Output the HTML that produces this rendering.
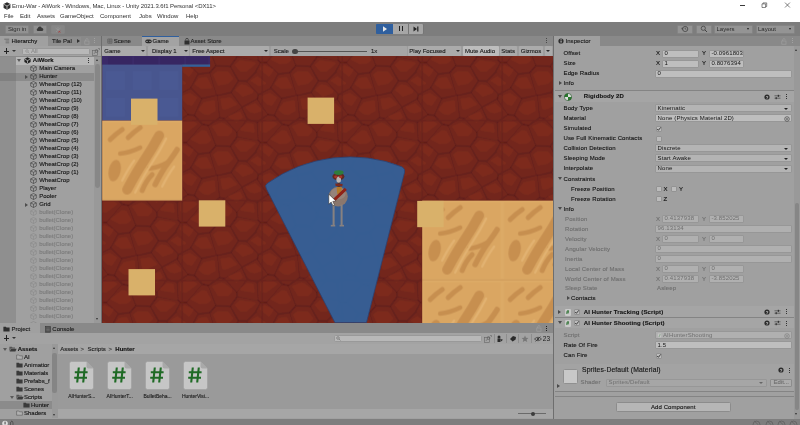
<!DOCTYPE html><html><head><meta charset="utf-8"><title>Unity</title><style>
*{box-sizing:border-box;margin:0;padding:0}
html,body{width:800px;height:425px;overflow:hidden;background:#a0a0a0}
#w{position:absolute;left:0;top:0;width:800px;height:425px;will-change:transform}
body{font-family:"Liberation Sans",sans-serif;font-size:6px;color:#111;position:relative;line-height:1}
.a{position:absolute}
.t{position:absolute;white-space:nowrap;line-height:8px;height:8px;-webkit-text-stroke:0.12px currentColor}
.b{font-weight:bold}
.fld{position:absolute;background:#bdbdbd;border:0.5px solid #979797;border-radius:1px;height:8px}
.fld span{position:absolute;left:1.6px;top:-0.5px;line-height:7.5px;white-space:nowrap}
.dd{position:absolute;background:#b3b3b3;border:0.5px solid #979797;border-radius:1px;height:8px}
.dd span{position:absolute;left:1.6px;top:-0.5px;line-height:7.5px;white-space:nowrap}
.dd i{position:absolute;right:2.6px;top:2.7px;width:0;height:0;border-left:2px solid transparent;border-right:2px solid transparent;border-top:2.5px solid #222}
.dis{color:#6e6e6e}
.cb{position:absolute;width:6px;height:6px;background:#bcbcbc;border:0.5px solid #939393;border-radius:1px}
.sep{position:absolute;height:0.7px;background:#848484}
.arrR{position:absolute;width:0;height:0;border-top:2px solid transparent;border-bottom:2px solid transparent;border-left:3px solid #4a4a4a}
.arrD{position:absolute;width:0;height:0;border-left:2px solid transparent;border-right:2px solid transparent;border-top:3px solid #4a4a4a}
</style></head><body><div id="w">
<div class="a" style="left:0px;top:0px;width:800px;height:21.5px;background:#ffffff;"></div>
<svg class="a" style="left:2.5px;top:1.5px" width="8" height="8" viewBox="0 0 8 8"><path d="M4 0.3 L7.4 2.1 V5.9 L4 7.7 L0.6 5.9 V2.1 Z" fill="#2b2b2b"/><path d="M4 4 V7.2 M4 4 L1 2.4 M4 4 L7 2.4" stroke="#ddd" stroke-width="0.7" fill="none"/></svg>
<div class="t " style="left:12px;top:2.0px;color:#333;letter-spacing:-0.07px;-webkit-text-stroke:0">Emu-War - AiWork - Windows, Mac, Linux - Unity 2021.3.6f1 Personal &lt;DX11&gt;</div>
<div class="a" style="left:739.5px;top:4.9px;width:5px;height:0.65px;background:#3a3a3a;"></div>
<svg class="a" style="left:761px;top:2px" width="7" height="7" viewBox="0 0 7 7"><path d="M1 1.9 H4.6 V5.5 H1 Z M2 1.9 V0.9 H5.7 V4.5 H4.6" fill="none" stroke="#3a3a3a" stroke-width="0.6"/></svg>
<svg class="a" style="left:784px;top:2px" width="7" height="7" viewBox="0 0 7 7"><path d="M1 0.6 L5.9 5.5 M5.9 0.6 L1 5.5" fill="none" stroke="#3a3a3a" stroke-width="0.65"/></svg>
<div class="t " style="left:4px;top:12.3px;color:#2e2e2e;-webkit-text-stroke:0">File</div>
<div class="t " style="left:20px;top:12.3px;color:#2e2e2e;-webkit-text-stroke:0">Edit</div>
<div class="t " style="left:37px;top:12.3px;color:#2e2e2e;-webkit-text-stroke:0">Assets</div>
<div class="t " style="left:60px;top:12.3px;color:#2e2e2e;-webkit-text-stroke:0">GameObject</div>
<div class="t " style="left:100px;top:12.3px;color:#2e2e2e;-webkit-text-stroke:0">Component</div>
<div class="t " style="left:139px;top:12.3px;color:#2e2e2e;-webkit-text-stroke:0">Jobs</div>
<div class="t " style="left:157px;top:12.3px;color:#2e2e2e;-webkit-text-stroke:0">Window</div>
<div class="t " style="left:186px;top:12.3px;color:#2e2e2e;-webkit-text-stroke:0">Help</div>
<div class="a" style="left:0px;top:21.5px;width:800px;height:14.5px;background:#7d7d7d;"></div>
<div class="a" style="left:4.5px;top:24.5px;width:24.5px;height:9px;background:#919191;border:0.5px solid #848484;border-radius:1px"></div>
<div class="t " style="left:8px;top:24.9px;color:#2a2a2a;-webkit-text-stroke:0">Sign in</div>
<div class="a" style="left:33px;top:24.5px;width:14px;height:9px;background:#919191;border:0.5px solid #848484;border-radius:1px"></div>
<svg class="a" style="left:36px;top:26px" width="8" height="6" viewBox="0 0 8 6"><path d="M1.6 5 A1.5 1.5 0 0 1 1.8 2.2 A2.1 2.1 0 0 1 5.8 1.9 A1.6 1.6 0 0 1 6.3 5 Z" fill="#3a3a3a"/></svg>
<div class="a" style="left:50.5px;top:24.5px;width:14.5px;height:9px;background:#868686;border:0.5px solid #848484;border-radius:1px"></div>
<svg class="a" style="left:54px;top:25.5px" width="8" height="8" viewBox="0 0 8 8"><path d="M4 1 V4 M1.5 2 L4 4 L6.5 2 M2 6 L4 4 L6 6" stroke="#9a9a9a" stroke-width="0.6" fill="none"/><path d="M4.5 4.8 L6.3 6.6 M6.3 4.8 L4.5 6.6" stroke="#a33" stroke-width="0.7"/></svg>
<div class="a" style="left:375.8px;top:23.8px;width:48px;height:9.9px;background:#767676;border-radius:1.2px"></div>
<div class="a" style="left:376px;top:24px;width:16.5px;height:9.5px;background:#2f5f9e;border-radius:1px 0 0 1px"></div>
<svg class="a" style="left:381.5px;top:26px" width="6" height="6" viewBox="0 0 6 6"><path d="M1 0.3 L5 3 L1 5.7 Z" fill="#e8e8e8"/></svg>
<div class="a" style="left:393.2px;top:24px;width:15.1px;height:9.5px;background:#a6a6a6;"></div>
<div class="a" style="left:399px;top:26.3px;width:1.3px;height:5px;background:#222;"></div>
<div class="a" style="left:401.6px;top:26.3px;width:1.3px;height:5px;background:#222;"></div>
<div class="a" style="left:409.1px;top:24px;width:14.4px;height:9.5px;background:#a6a6a6;border-radius:0 1px 1px 0"></div>
<svg class="a" style="left:413px;top:26px" width="7" height="6" viewBox="0 0 7 6"><path d="M0.5 0.5 L4 3 L0.5 5.5 Z" fill="#222"/><rect x="4.2" y="0.5" width="1.2" height="5" fill="#222"/></svg>
<div class="a" style="left:677px;top:24.5px;width:16px;height:9px;background:#949494;border:0.5px solid #848484;border-radius:1px"></div>
<svg class="a" style="left:681px;top:25px" width="8" height="8" viewBox="0 0 8 8"><circle cx="4.2" cy="4" r="2.6" fill="none" stroke="#3a3a3a" stroke-width="0.7"/><path d="M4.2 2.5 V4 L5.3 4.6 M1.2 2.6 L1.6 4.2 L0.3 3.6" stroke="#3a3a3a" stroke-width="0.6" fill="none"/></svg>
<div class="a" style="left:696px;top:24.5px;width:15.5px;height:9px;background:#949494;border:0.5px solid #848484;border-radius:1px"></div>
<svg class="a" style="left:700px;top:25px" width="8" height="8" viewBox="0 0 8 8"><circle cx="3.3" cy="3.3" r="2.1" fill="none" stroke="#3a3a3a" stroke-width="0.7"/><path d="M4.9 4.9 L7 7" stroke="#3a3a3a" stroke-width="0.9"/></svg>
<div class="a" style="left:714.3px;top:24.5px;width:38.7px;height:9px;background:#949494;border:0.5px solid #848484;border-radius:1px"></div>
<div class="t " style="left:716.5px;top:24.9px;color:#2a2a2a;-webkit-text-stroke:0">Layers</div>
<div class="arrD" style="left:747.3px;top:28.2px;border-top-color:#222;border-left-width:1.7px;border-right-width:1.7px;border-top-width:2.3px"></div>
<div class="a" style="left:756px;top:24.5px;width:39px;height:9px;background:#949494;border:0.5px solid #848484;border-radius:1px"></div>
<div class="t " style="left:758px;top:24.9px;color:#2a2a2a;-webkit-text-stroke:0">Layout</div>
<div class="arrD" style="left:789.3px;top:28.2px;border-top-color:#222;border-left-width:1.7px;border-right-width:1.7px;border-top-width:2.3px"></div>
<div class="a" style="left:0px;top:36px;width:101.5px;height:10px;background:#898989;"></div>
<div class="a" style="left:0px;top:36px;width:47.5px;height:10px;background:#a0a0a0;"></div>
<svg class="a" style="left:4px;top:38px" width="6" height="6" viewBox="0 0 6 6"><path d="M0.3 1.2 H5.2 M1.6 3 H5.2 M1.6 4.8 H5.2" stroke="#4a4a4a" stroke-width="0.55"/></svg>
<div class="t " style="left:11.5px;top:36.7px;">Hierarchy</div>
<div class="a" style="left:48px;top:36.5px;width:33.3px;height:9.5px;background:#8e8e8e;"></div>
<div class="t " style="left:52px;top:36.7px;color:#1c1c1c">Tile Pal&#8201;</div>
<div class="arrR" style="left:76.5px;top:39px;border-left-color:#333"></div>
<svg class="a" style="left:83.5px;top:37.5px" width="6" height="7" viewBox="0 0 6 7"><rect x="0.8" y="3" width="4.2" height="3.2" fill="none" stroke="#9f9f9f" stroke-width="0.7"/><path d="M1.7 3 V1.8 A1.2 1.2 0 0 1 4.1 1.8" fill="none" stroke="#9f9f9f" stroke-width="0.7"/></svg>
<div class="a" style="left:94.2px;top:38.3px;width:0.9px;height:0.9px;background:#a2a2a2;"></div>
<div class="a" style="left:94.2px;top:40.3px;width:0.9px;height:0.9px;background:#a2a2a2;"></div>
<div class="a" style="left:94.2px;top:42.3px;width:0.9px;height:0.9px;background:#a2a2a2;"></div>
<div class="a" style="left:0px;top:46px;width:101.5px;height:10.5px;background:#a3a3a3;"></div>
<div class="a" style="left:0px;top:56px;width:101.5px;height:0.6px;background:#8a8a8a;"></div>
<div class="a" style="left:3.8px;top:50.6px;width:5.6px;height:0.9px;background:#222;"></div>
<div class="a" style="left:6.15px;top:48.2px;width:0.9px;height:5.6px;background:#222;"></div>
<div class="arrD" style="left:11.5px;top:50px;border-top-color:#333;border-left-width:2.1px;border-right-width:2.1px;border-top-width:2.6px"></div>
<div class="a" style="left:22.3px;top:47.5px;width:68px;height:7.5px;background:#b8b8b8;border:0.5px solid #999;border-radius:1.5px"></div>
<svg class="a" style="left:25px;top:49px" width="5" height="5" viewBox="0 0 5 5"><circle cx="2" cy="2" r="1.3" fill="none" stroke="#8a8a8a" stroke-width="0.6"/><path d="M3 3 L4.5 4.5" stroke="#8a8a8a" stroke-width="0.6"/></svg>
<div class="t " style="left:31px;top:47.0px;color:#8c8c8c">All</div>
<svg class="a" style="left:91.5px;top:47.5px" width="8" height="8" viewBox="0 0 8 8"><rect x="0.5" y="2.5" width="5" height="5" fill="none" stroke="#666" stroke-width="0.6"/><circle cx="4.5" cy="3" r="1.4" fill="none" stroke="#555" stroke-width="0.6"/><path d="M3.5 4 L2 5.8" stroke="#555" stroke-width="0.6"/><path d="M6 0.5 H7.5 V2" fill="none" stroke="#666" stroke-width="0.6"/></svg>
<div class="a" style="left:0px;top:56.6px;width:101.5px;height:266px;background:#a0a0a0;"></div>
<div class="a" style="left:0px;top:56.6px;width:16px;height:266px;background:#8f8f8f;"></div>
<div class="a" style="left:16px;top:56.6px;width:78px;height:8px;background:#b6b6b6;"></div>
<div class="a" style="left:0px;top:72.5px;width:94px;height:8px;background:#8b8b8b;"></div>
<div class="a" style="left:0px;top:72.5px;width:16px;height:8px;background:#808080;"></div>
<div class="a" style="left:94px;top:56.6px;width:7.5px;height:266px;background:#999999;"></div>
<div class="a" style="left:95.3px;top:64px;width:4.8px;height:124px;background:#878787;border-radius:2.4px"></div>
<div class="a" style="left:95.7px;top:59.3px;width:0;height:0;border-left:1.9px solid transparent;border-right:1.9px solid transparent;border-bottom:2.6px solid #333"></div>
<div class="a" style="left:95.7px;top:317.5px;width:0;height:0;border-left:1.9px solid transparent;border-right:1.9px solid transparent;border-top:2.6px solid #333"></div>
<div class="arrD" style="left:17.3px;top:59.2px;border-top-color:#5a5a5a"></div>
<svg class="a" style="left:23.5px;top:57.2px" width="7" height="7" viewBox="0 0 7 7"><path d="M3.5 0.3 L6.6 1.9 V5.1 L3.5 6.7 L0.4 5.1 V1.9 Z" fill="#222"/><path d="M3.5 3.6 V6.2 M3.5 3.6 L1 2.3 M3.5 3.6 L6 2.3" stroke="#ccc" stroke-width="0.7" fill="none"/></svg>
<div class="t b" style="left:32.8px;top:56.300000000000004px;color:#111">AiWork</div>
<div class="a" style="left:87.6px;top:58.4px;width:0.9px;height:0.9px;background:#333;"></div>
<div class="a" style="left:87.6px;top:60.4px;width:0.9px;height:0.9px;background:#333;"></div>
<div class="a" style="left:87.6px;top:62.4px;width:0.9px;height:0.9px;background:#333;"></div>
<svg class="a" style="left:30.2px;top:65.0px" width="7" height="7" viewBox="0 0 7 7"><path d="M3.5 0.5 L6.3 1.9 V5.1 L3.5 6.5 L0.7 5.1 V1.9 Z M0.7 1.9 L3.5 3.3 L6.3 1.9 M3.5 3.3 V6.5" fill="none" stroke="#3c3c3c" stroke-width="0.6" stroke-linejoin="round"/></svg>
<div class="t " style="left:39.2px;top:64.3px;color:#141414">Main Camera</div>
<svg class="a" style="left:30.2px;top:73.0px" width="7" height="7" viewBox="0 0 7 7"><path d="M3.5 0.5 L6.3 1.9 V5.1 L3.5 6.5 L0.7 5.1 V1.9 Z M0.7 1.9 L3.5 3.3 L6.3 1.9 M3.5 3.3 V6.5" fill="none" stroke="#3c3c3c" stroke-width="0.6" stroke-linejoin="round"/></svg>
<div class="t " style="left:39.2px;top:72.3px;color:#141414">Hunter</div>
<div class="arrR" style="left:25.3px;top:74.5px;border-left-color:#4e4e4e"></div>
<svg class="a" style="left:30.2px;top:81.0px" width="7" height="7" viewBox="0 0 7 7"><path d="M3.5 0.5 L6.3 1.9 V5.1 L3.5 6.5 L0.7 5.1 V1.9 Z M0.7 1.9 L3.5 3.3 L6.3 1.9 M3.5 3.3 V6.5" fill="none" stroke="#3c3c3c" stroke-width="0.6" stroke-linejoin="round"/></svg>
<div class="t " style="left:39.2px;top:80.3px;color:#141414">WheatCrop (12)</div>
<svg class="a" style="left:30.2px;top:89.0px" width="7" height="7" viewBox="0 0 7 7"><path d="M3.5 0.5 L6.3 1.9 V5.1 L3.5 6.5 L0.7 5.1 V1.9 Z M0.7 1.9 L3.5 3.3 L6.3 1.9 M3.5 3.3 V6.5" fill="none" stroke="#3c3c3c" stroke-width="0.6" stroke-linejoin="round"/></svg>
<div class="t " style="left:39.2px;top:88.3px;color:#141414">WheatCrop (11)</div>
<svg class="a" style="left:30.2px;top:97.0px" width="7" height="7" viewBox="0 0 7 7"><path d="M3.5 0.5 L6.3 1.9 V5.1 L3.5 6.5 L0.7 5.1 V1.9 Z M0.7 1.9 L3.5 3.3 L6.3 1.9 M3.5 3.3 V6.5" fill="none" stroke="#3c3c3c" stroke-width="0.6" stroke-linejoin="round"/></svg>
<div class="t " style="left:39.2px;top:96.3px;color:#141414">WheatCrop (10)</div>
<svg class="a" style="left:30.2px;top:105.0px" width="7" height="7" viewBox="0 0 7 7"><path d="M3.5 0.5 L6.3 1.9 V5.1 L3.5 6.5 L0.7 5.1 V1.9 Z M0.7 1.9 L3.5 3.3 L6.3 1.9 M3.5 3.3 V6.5" fill="none" stroke="#3c3c3c" stroke-width="0.6" stroke-linejoin="round"/></svg>
<div class="t " style="left:39.2px;top:104.3px;color:#141414">WheatCrop (9)</div>
<svg class="a" style="left:30.2px;top:113.0px" width="7" height="7" viewBox="0 0 7 7"><path d="M3.5 0.5 L6.3 1.9 V5.1 L3.5 6.5 L0.7 5.1 V1.9 Z M0.7 1.9 L3.5 3.3 L6.3 1.9 M3.5 3.3 V6.5" fill="none" stroke="#3c3c3c" stroke-width="0.6" stroke-linejoin="round"/></svg>
<div class="t " style="left:39.2px;top:112.3px;color:#141414">WheatCrop (8)</div>
<svg class="a" style="left:30.2px;top:121.0px" width="7" height="7" viewBox="0 0 7 7"><path d="M3.5 0.5 L6.3 1.9 V5.1 L3.5 6.5 L0.7 5.1 V1.9 Z M0.7 1.9 L3.5 3.3 L6.3 1.9 M3.5 3.3 V6.5" fill="none" stroke="#3c3c3c" stroke-width="0.6" stroke-linejoin="round"/></svg>
<div class="t " style="left:39.2px;top:120.3px;color:#141414">WheatCrop (7)</div>
<svg class="a" style="left:30.2px;top:129.0px" width="7" height="7" viewBox="0 0 7 7"><path d="M3.5 0.5 L6.3 1.9 V5.1 L3.5 6.5 L0.7 5.1 V1.9 Z M0.7 1.9 L3.5 3.3 L6.3 1.9 M3.5 3.3 V6.5" fill="none" stroke="#3c3c3c" stroke-width="0.6" stroke-linejoin="round"/></svg>
<div class="t " style="left:39.2px;top:128.29999999999998px;color:#141414">WheatCrop (6)</div>
<svg class="a" style="left:30.2px;top:137.0px" width="7" height="7" viewBox="0 0 7 7"><path d="M3.5 0.5 L6.3 1.9 V5.1 L3.5 6.5 L0.7 5.1 V1.9 Z M0.7 1.9 L3.5 3.3 L6.3 1.9 M3.5 3.3 V6.5" fill="none" stroke="#3c3c3c" stroke-width="0.6" stroke-linejoin="round"/></svg>
<div class="t " style="left:39.2px;top:136.29999999999998px;color:#141414">WheatCrop (5)</div>
<svg class="a" style="left:30.2px;top:145.0px" width="7" height="7" viewBox="0 0 7 7"><path d="M3.5 0.5 L6.3 1.9 V5.1 L3.5 6.5 L0.7 5.1 V1.9 Z M0.7 1.9 L3.5 3.3 L6.3 1.9 M3.5 3.3 V6.5" fill="none" stroke="#3c3c3c" stroke-width="0.6" stroke-linejoin="round"/></svg>
<div class="t " style="left:39.2px;top:144.29999999999998px;color:#141414">WheatCrop (4)</div>
<svg class="a" style="left:30.2px;top:153.0px" width="7" height="7" viewBox="0 0 7 7"><path d="M3.5 0.5 L6.3 1.9 V5.1 L3.5 6.5 L0.7 5.1 V1.9 Z M0.7 1.9 L3.5 3.3 L6.3 1.9 M3.5 3.3 V6.5" fill="none" stroke="#3c3c3c" stroke-width="0.6" stroke-linejoin="round"/></svg>
<div class="t " style="left:39.2px;top:152.29999999999998px;color:#141414">WheatCrop (3)</div>
<svg class="a" style="left:30.2px;top:161.0px" width="7" height="7" viewBox="0 0 7 7"><path d="M3.5 0.5 L6.3 1.9 V5.1 L3.5 6.5 L0.7 5.1 V1.9 Z M0.7 1.9 L3.5 3.3 L6.3 1.9 M3.5 3.3 V6.5" fill="none" stroke="#3c3c3c" stroke-width="0.6" stroke-linejoin="round"/></svg>
<div class="t " style="left:39.2px;top:160.29999999999998px;color:#141414">WheatCrop (2)</div>
<svg class="a" style="left:30.2px;top:169.0px" width="7" height="7" viewBox="0 0 7 7"><path d="M3.5 0.5 L6.3 1.9 V5.1 L3.5 6.5 L0.7 5.1 V1.9 Z M0.7 1.9 L3.5 3.3 L6.3 1.9 M3.5 3.3 V6.5" fill="none" stroke="#3c3c3c" stroke-width="0.6" stroke-linejoin="round"/></svg>
<div class="t " style="left:39.2px;top:168.29999999999998px;color:#141414">WheatCrop (1)</div>
<svg class="a" style="left:30.2px;top:177.0px" width="7" height="7" viewBox="0 0 7 7"><path d="M3.5 0.5 L6.3 1.9 V5.1 L3.5 6.5 L0.7 5.1 V1.9 Z M0.7 1.9 L3.5 3.3 L6.3 1.9 M3.5 3.3 V6.5" fill="none" stroke="#3c3c3c" stroke-width="0.6" stroke-linejoin="round"/></svg>
<div class="t " style="left:39.2px;top:176.29999999999998px;color:#141414">WheatCrop</div>
<svg class="a" style="left:30.2px;top:185.0px" width="7" height="7" viewBox="0 0 7 7"><path d="M3.5 0.5 L6.3 1.9 V5.1 L3.5 6.5 L0.7 5.1 V1.9 Z M0.7 1.9 L3.5 3.3 L6.3 1.9 M3.5 3.3 V6.5" fill="none" stroke="#3c3c3c" stroke-width="0.6" stroke-linejoin="round"/></svg>
<div class="t " style="left:39.2px;top:184.29999999999998px;color:#141414">Player</div>
<svg class="a" style="left:30.2px;top:193.0px" width="7" height="7" viewBox="0 0 7 7"><path d="M3.5 0.5 L6.3 1.9 V5.1 L3.5 6.5 L0.7 5.1 V1.9 Z M0.7 1.9 L3.5 3.3 L6.3 1.9 M3.5 3.3 V6.5" fill="none" stroke="#3c3c3c" stroke-width="0.6" stroke-linejoin="round"/></svg>
<div class="t " style="left:39.2px;top:192.29999999999998px;color:#141414">Pooler</div>
<svg class="a" style="left:30.2px;top:201.0px" width="7" height="7" viewBox="0 0 7 7"><path d="M3.5 0.5 L6.3 1.9 V5.1 L3.5 6.5 L0.7 5.1 V1.9 Z M0.7 1.9 L3.5 3.3 L6.3 1.9 M3.5 3.3 V6.5" fill="none" stroke="#3c3c3c" stroke-width="0.6" stroke-linejoin="round"/></svg>
<div class="t " style="left:39.2px;top:200.29999999999998px;color:#141414">Grid</div>
<div class="arrR" style="left:25.3px;top:202.5px;border-left-color:#4e4e4e"></div>
<svg class="a" style="left:30.2px;top:209.0px" width="7" height="7" viewBox="0 0 7 7"><path d="M3.5 0.5 L6.3 1.9 V5.1 L3.5 6.5 L0.7 5.1 V1.9 Z M0.7 1.9 L3.5 3.3 L6.3 1.9 M3.5 3.3 V6.5" fill="none" stroke="#8a8a8a" stroke-width="0.6" stroke-linejoin="round"/></svg>
<div class="t" style="left:39.2px;top:208.1px;color:#7b7b7b;height:8px;overflow:hidden">bullet(Clone)</div>
<svg class="a" style="left:30.2px;top:217.0px" width="7" height="7" viewBox="0 0 7 7"><path d="M3.5 0.5 L6.3 1.9 V5.1 L3.5 6.5 L0.7 5.1 V1.9 Z M0.7 1.9 L3.5 3.3 L6.3 1.9 M3.5 3.3 V6.5" fill="none" stroke="#8a8a8a" stroke-width="0.6" stroke-linejoin="round"/></svg>
<div class="t" style="left:39.2px;top:216.1px;color:#7b7b7b;height:8px;overflow:hidden">bullet(Clone)</div>
<svg class="a" style="left:30.2px;top:225.0px" width="7" height="7" viewBox="0 0 7 7"><path d="M3.5 0.5 L6.3 1.9 V5.1 L3.5 6.5 L0.7 5.1 V1.9 Z M0.7 1.9 L3.5 3.3 L6.3 1.9 M3.5 3.3 V6.5" fill="none" stroke="#8a8a8a" stroke-width="0.6" stroke-linejoin="round"/></svg>
<div class="t" style="left:39.2px;top:224.1px;color:#7b7b7b;height:8px;overflow:hidden">bullet(Clone)</div>
<svg class="a" style="left:30.2px;top:233.0px" width="7" height="7" viewBox="0 0 7 7"><path d="M3.5 0.5 L6.3 1.9 V5.1 L3.5 6.5 L0.7 5.1 V1.9 Z M0.7 1.9 L3.5 3.3 L6.3 1.9 M3.5 3.3 V6.5" fill="none" stroke="#8a8a8a" stroke-width="0.6" stroke-linejoin="round"/></svg>
<div class="t" style="left:39.2px;top:232.1px;color:#7b7b7b;height:8px;overflow:hidden">bullet(Clone)</div>
<svg class="a" style="left:30.2px;top:241.0px" width="7" height="7" viewBox="0 0 7 7"><path d="M3.5 0.5 L6.3 1.9 V5.1 L3.5 6.5 L0.7 5.1 V1.9 Z M0.7 1.9 L3.5 3.3 L6.3 1.9 M3.5 3.3 V6.5" fill="none" stroke="#8a8a8a" stroke-width="0.6" stroke-linejoin="round"/></svg>
<div class="t" style="left:39.2px;top:240.1px;color:#7b7b7b;height:8px;overflow:hidden">bullet(Clone)</div>
<svg class="a" style="left:30.2px;top:249.0px" width="7" height="7" viewBox="0 0 7 7"><path d="M3.5 0.5 L6.3 1.9 V5.1 L3.5 6.5 L0.7 5.1 V1.9 Z M0.7 1.9 L3.5 3.3 L6.3 1.9 M3.5 3.3 V6.5" fill="none" stroke="#8a8a8a" stroke-width="0.6" stroke-linejoin="round"/></svg>
<div class="t" style="left:39.2px;top:248.1px;color:#7b7b7b;height:8px;overflow:hidden">bullet(Clone)</div>
<svg class="a" style="left:30.2px;top:257.0px" width="7" height="7" viewBox="0 0 7 7"><path d="M3.5 0.5 L6.3 1.9 V5.1 L3.5 6.5 L0.7 5.1 V1.9 Z M0.7 1.9 L3.5 3.3 L6.3 1.9 M3.5 3.3 V6.5" fill="none" stroke="#8a8a8a" stroke-width="0.6" stroke-linejoin="round"/></svg>
<div class="t" style="left:39.2px;top:256.1px;color:#7b7b7b;height:8px;overflow:hidden">bullet(Clone)</div>
<svg class="a" style="left:30.2px;top:265.0px" width="7" height="7" viewBox="0 0 7 7"><path d="M3.5 0.5 L6.3 1.9 V5.1 L3.5 6.5 L0.7 5.1 V1.9 Z M0.7 1.9 L3.5 3.3 L6.3 1.9 M3.5 3.3 V6.5" fill="none" stroke="#8a8a8a" stroke-width="0.6" stroke-linejoin="round"/></svg>
<div class="t" style="left:39.2px;top:264.1px;color:#7b7b7b;height:8px;overflow:hidden">bullet(Clone)</div>
<svg class="a" style="left:30.2px;top:273.0px" width="7" height="7" viewBox="0 0 7 7"><path d="M3.5 0.5 L6.3 1.9 V5.1 L3.5 6.5 L0.7 5.1 V1.9 Z M0.7 1.9 L3.5 3.3 L6.3 1.9 M3.5 3.3 V6.5" fill="none" stroke="#8a8a8a" stroke-width="0.6" stroke-linejoin="round"/></svg>
<div class="t" style="left:39.2px;top:272.1px;color:#7b7b7b;height:8px;overflow:hidden">bullet(Clone)</div>
<svg class="a" style="left:30.2px;top:281.0px" width="7" height="7" viewBox="0 0 7 7"><path d="M3.5 0.5 L6.3 1.9 V5.1 L3.5 6.5 L0.7 5.1 V1.9 Z M0.7 1.9 L3.5 3.3 L6.3 1.9 M3.5 3.3 V6.5" fill="none" stroke="#8a8a8a" stroke-width="0.6" stroke-linejoin="round"/></svg>
<div class="t" style="left:39.2px;top:280.1px;color:#7b7b7b;height:8px;overflow:hidden">bullet(Clone)</div>
<svg class="a" style="left:30.2px;top:289.0px" width="7" height="7" viewBox="0 0 7 7"><path d="M3.5 0.5 L6.3 1.9 V5.1 L3.5 6.5 L0.7 5.1 V1.9 Z M0.7 1.9 L3.5 3.3 L6.3 1.9 M3.5 3.3 V6.5" fill="none" stroke="#8a8a8a" stroke-width="0.6" stroke-linejoin="round"/></svg>
<div class="t" style="left:39.2px;top:288.1px;color:#7b7b7b;height:8px;overflow:hidden">bullet(Clone)</div>
<svg class="a" style="left:30.2px;top:297.0px" width="7" height="7" viewBox="0 0 7 7"><path d="M3.5 0.5 L6.3 1.9 V5.1 L3.5 6.5 L0.7 5.1 V1.9 Z M0.7 1.9 L3.5 3.3 L6.3 1.9 M3.5 3.3 V6.5" fill="none" stroke="#8a8a8a" stroke-width="0.6" stroke-linejoin="round"/></svg>
<div class="t" style="left:39.2px;top:296.1px;color:#7b7b7b;height:8px;overflow:hidden">bullet(Clone)</div>
<svg class="a" style="left:30.2px;top:305.0px" width="7" height="7" viewBox="0 0 7 7"><path d="M3.5 0.5 L6.3 1.9 V5.1 L3.5 6.5 L0.7 5.1 V1.9 Z M0.7 1.9 L3.5 3.3 L6.3 1.9 M3.5 3.3 V6.5" fill="none" stroke="#8a8a8a" stroke-width="0.6" stroke-linejoin="round"/></svg>
<div class="t" style="left:39.2px;top:304.1px;color:#7b7b7b;height:8px;overflow:hidden">bullet(Clone)</div>
<svg class="a" style="left:30.2px;top:313.0px" width="7" height="7" viewBox="0 0 7 7"><path d="M3.5 0.5 L6.3 1.9 V5.1 L3.5 6.5 L0.7 5.1 V1.9 Z M0.7 1.9 L3.5 3.3 L6.3 1.9 M3.5 3.3 V6.5" fill="none" stroke="#8a8a8a" stroke-width="0.6" stroke-linejoin="round"/></svg>
<div class="t" style="left:39.2px;top:312.1px;color:#7b7b7b;height:8px;overflow:hidden">bullet(Clone)</div>
<svg class="a" style="left:30.2px;top:321.0px" width="7" height="7" viewBox="0 0 7 7"><path d="M3.5 0.5 L6.3 1.9 V5.1 L3.5 6.5 L0.7 5.1 V1.9 Z M0.7 1.9 L3.5 3.3 L6.3 1.9 M3.5 3.3 V6.5" fill="none" stroke="#8a8a8a" stroke-width="0.6" stroke-linejoin="round"/></svg>
<div class="t" style="left:39.2px;top:320.1px;color:#7b7b7b;height:2.1000000000000227px;overflow:hidden">bullet(Clone)</div>
<div class="a" style="left:0px;top:322.6px;width:553.3px;height:0.6px;background:#7a7a7a;"></div>
<div class="a" style="left:101.3px;top:36px;width:0.9px;height:287px;background:#6e6e6e;"></div>
<div class="a" style="left:102.2px;top:36px;width:451.1px;height:10px;background:#898989;"></div>
<svg class="a" style="left:106.5px;top:38.2px" width="6" height="6" viewBox="0 0 6 6"><path d="M0.8 1 H5 V5.2 H0.8Z M2.9 1 V5.2 M0.8 3.1 H5" fill="none" stroke="#4a4a4a" stroke-width="0.5"/></svg>
<div class="t " style="left:113.8px;top:36.7px;color:#222">Scene</div>
<div class="a" style="left:142px;top:36px;width:36.5px;height:10px;background:#a3a3a3;"></div>
<div class="a" style="left:142px;top:36px;width:36.5px;height:1px;background:#2f5f9e;"></div>
<svg class="a" style="left:144.5px;top:38.8px" width="7" height="5" viewBox="0 0 7 5"><rect x="0.3" y="0.6" width="6.4" height="3.6" rx="1.8" fill="#2a2a2a"/><circle cx="2" cy="2.4" r="0.7" fill="#aaa"/><circle cx="5" cy="2.4" r="0.7" fill="#aaa"/></svg>
<div class="t " style="left:152.5px;top:36.7px;color:#1a1a1a">Game</div>
<svg class="a" style="left:183.5px;top:38px" width="6" height="7" viewBox="0 0 6 7"><rect x="0.5" y="2.5" width="5" height="4" fill="#2e2e2e"/><path d="M1.7 2.5 V1.6 A1.3 1.3 0 0 1 4.3 1.6 V2.5" fill="none" stroke="#2e2e2e" stroke-width="0.7"/></svg>
<div class="t " style="left:190.5px;top:36.7px;color:#222">Asset Store</div>
<div class="a" style="left:546.3px;top:38.3px;width:0.9px;height:0.9px;background:#4a4a4a;"></div>
<div class="a" style="left:546.3px;top:40.3px;width:0.9px;height:0.9px;background:#4a4a4a;"></div>
<div class="a" style="left:546.3px;top:42.3px;width:0.9px;height:0.9px;background:#4a4a4a;"></div>
<div class="a" style="left:101.8px;top:46px;width:451.5px;height:10.4px;background:#9c9c9c;"></div>
<div class="a" style="left:102.3px;top:46.3px;width:43.500000000000014px;height:9.6px;background:#ababab;border-radius:1px"></div>
<div class="t " style="left:104.3px;top:47.1px;color:#1a1a1a">Game</div>
<div class="arrD" style="left:140.8px;top:50.2px;border-top-color:#2a2a2a;border-left-width:2px;border-right-width:2px;border-top-width:2.6px"></div>
<div class="a" style="left:147.8px;top:46.3px;width:40.79999999999998px;height:9.6px;background:#ababab;border-radius:1px"></div>
<div class="t " style="left:152px;top:47.1px;color:#1a1a1a">Display 1</div>
<div class="arrD" style="left:183.6px;top:50.2px;border-top-color:#2a2a2a;border-left-width:2px;border-right-width:2px;border-top-width:2.6px"></div>
<div class="a" style="left:190.2px;top:46.3px;width:79.19999999999999px;height:9.6px;background:#ababab;border-radius:1px"></div>
<div class="t " style="left:192.3px;top:47.1px;color:#1a1a1a">Free Aspect</div>
<div class="arrD" style="left:264px;top:50.2px;border-top-color:#2a2a2a;border-left-width:2px;border-right-width:2px;border-top-width:2.6px"></div>
<div class="a" style="left:271px;top:46.3px;width:135.5px;height:9.6px;background:#a6a6a6;border-radius:1px"></div>
<div class="t " style="left:273.8px;top:47.1px;color:#1a1a1a">Scale</div>
<div class="a" style="left:295px;top:51.2px;width:72.3px;height:0.7px;background:#555;"></div>
<div class="a" style="left:292.2px;top:48.8px;width:5.4px;height:5.4px;background:#454545;border-radius:50%"></div>
<div class="t " style="left:371px;top:47.1px;color:#1a1a1a">1x</div>
<div class="a" style="left:407.7px;top:46.3px;width:53.69999999999999px;height:9.6px;background:#ababab;border-radius:1px"></div>
<div class="t " style="left:409.3px;top:47.1px;color:#1a1a1a">Play Focused</div>
<div class="arrD" style="left:456.3px;top:50.2px;border-top-color:#2a2a2a;border-left-width:2px;border-right-width:2px;border-top-width:2.6px"></div>
<div class="a" style="left:463px;top:46.3px;width:35.69999999999999px;height:9.6px;background:#bdbdbd;border-radius:1px"></div>
<div class="t " style="left:465px;top:47.1px;color:#1a1a1a">Mute Audio</div>
<div class="a" style="left:500px;top:46.3px;width:17.399999999999977px;height:9.6px;background:#ababab;border-radius:1px"></div>
<div class="t " style="left:501.3px;top:47.1px;color:#1a1a1a">Stats</div>
<div class="a" style="left:518.9px;top:46.3px;width:24.200000000000045px;height:9.6px;background:#ababab;border-radius:1px"></div>
<div class="t " style="left:520.8px;top:47.1px;color:#1a1a1a">Gizmos</div>
<div class="a" style="left:544.5px;top:46.3px;width:7.899999999999977px;height:9.6px;background:#ababab;border-radius:1px"></div>
<div class="t " style="left:0px;top:47.1px;color:#1a1a1a"></div>
<div class="arrD" style="left:546.4px;top:50.2px;border-top-color:#2a2a2a;border-left-width:2px;border-right-width:2px;border-top-width:2.6px"></div>
<svg class="a" style="left:101.8px;top:56.4px" width="451.49999999999994" height="266.20000000000005" viewBox="101.8 56.4 451.49999999999994 266.20000000000005">
<defs>
<filter id="bl" x="0" y="0" width="100%" height="100%"><feGaussianBlur stdDeviation="0.55"/></filter>
<filter id="bl2"><feGaussianBlur stdDeviation="0.35"/></filter>
<pattern id="rock" x="102" y="41" width="80" height="80" patternUnits="userSpaceOnUse">
<rect width="80" height="80" fill="#621e19"/>
<path d="M-5.6 0.0 L4.2 -6.3 L-5.5 -20.0 L-18.6 -12.8 L-18.6 -12.3 L-13.8 -2.6Z M-18.6 67.2 L-18.6 67.7 L-13.8 77.4 L-5.6 80.0 L4.2 73.7 L-5.5 60.0Z M7.1 46.4 L-5.9 33.1 L-13.9 41.0 L-3.4 52.4 L7.0 47.0Z M36.1 -3.9 L26.1 3.3 L20.7 2.0 L13.8 -5.7 L20.6 -20.7 L33.7 -24.0 L34.5 -23.6Z M61.4 -12.3 L66.2 -2.6 L74.4 0.0 L84.2 -6.3 L74.5 -20.0 L61.4 -12.8Z M43.7 -1.9 L54.7 9.9 L63.6 -1.2 L59.2 -11.3Z M16.8 31.8 L5.8 21.8 L20.1 5.2 L25.6 6.6 L32.1 24.6 L26.9 30.6Z M42.1 -0.3 L52.9 11.6 L53.4 15.6 L47.5 24.1 L34.6 23.8 L27.7 5.6 L38.0 -1.3Z M65.3 0.5 L73.8 2.6 L74.9 18.6 L56.4 15.3 L56.3 11.3Z M56.1 17.6 L74.8 20.8 L76.5 22.5 L71.9 30.9 L64.5 38.8 L57.3 38.8 L49.8 26.0Z M10.5 46.6 L16.7 35.0 L26.8 33.5 L33.0 53.6 L19.7 56.2 L10.3 47.2Z M8.3 49.2 L-2.4 55.1 L-3.2 58.8 L5.9 72.3 L11.5 73.3 L18.1 58.3Z M20.6 59.3 L13.8 74.3 L20.7 82.0 L26.1 83.3 L36.1 76.1 L34.5 56.4 L33.7 56.0Z M42.7 76.4 L38.6 75.8 L36.6 56.1 L48.7 53.6 L58.2 66.4 L58.1 66.9Z M64.3 42.2 L74.5 53.8 L73.7 57.6 L60.3 64.9 L50.6 51.9 L57.2 41.7Z M66.2 77.4 L61.4 67.7 L61.4 67.2 L74.5 60.0 L84.2 73.7 L74.4 80.0Z M47.3 27.2 L34.4 26.8 L29.1 33.0 L35.1 53.0 L35.9 53.4 L47.9 50.5 L54.6 40.3Z M-3.5 2.5 L5.7 -4.3 L11.3 -3.6 L18.4 4.0 L4.2 20.3 L-1.2 20.3 L-2.8 18.4Z M66.1 41.0 L76.6 52.4 L87.0 47.0 L87.1 46.4 L74.1 33.1Z M63.6 78.8 L59.2 68.7 L43.7 78.1 L54.7 89.9Z M8.3 45.2 L-4.8 31.4 L-1.0 23.2 L4.1 23.7 L14.6 33.1Z M52.9 91.6 L42.1 79.7 L38.0 78.7 L27.7 85.6 L34.6 103.8 L47.5 104.1 L53.4 95.6Z M65.3 80.5 L56.3 91.3 L56.4 95.3 L74.9 98.6 L73.8 82.6Z M11.3 76.4 L18.4 84.0 L4.2 100.3 L-1.2 100.3 L-2.8 98.4 L-3.5 82.5 L5.7 75.7Z M85.9 72.3 L76.8 58.8 L77.6 55.1 L88.3 49.2 L98.1 58.3 L91.5 73.3Z M91.3 -3.6 L98.4 4.0 L84.2 20.3 L78.8 20.3 L77.2 18.4 L76.5 2.5 L85.7 -4.3Z M75.2 31.4 L88.3 45.2 L94.6 33.1 L84.1 23.7 L79.0 23.2Z M76.5 82.5 L85.7 75.7 L91.3 76.4 L98.4 84.0 L84.2 100.3 L78.8 100.3 L77.2 98.4Z" fill="#73271c" stroke="#73271c" stroke-width="1.6" stroke-linejoin="round"/>
<path d="M-7.5 -7.7 L0.1 -10.3 L-7.2 -16.6 L-15.9 -13.2 L-15.9 -12.9 L-12.5 -9.2Z M-15.9 66.8 L-15.9 67.1 L-12.5 70.8 L-7.5 72.3 L0.1 69.7 L-7.2 63.4Z M3.5 42.4 L-5.0 36.5 L-10.8 40.0 L-3.2 44.8 L3.5 42.7Z M32.7 -10.0 L25.8 -6.4 L21.9 -7.1 L16.8 -10.7 L21.9 -17.7 L31.5 -19.6 L32.1 -19.4Z M64.1 -12.9 L67.5 -9.2 L72.5 -7.7 L80.1 -10.3 L72.8 -16.6 L64.1 -13.2Z M46.8 -4.1 L54.6 1.2 L60.0 -3.7 L57.6 -8.2Z M17.7 23.0 L9.2 18.4 L20.0 10.3 L24.0 11.1 L28.4 19.6 L24.8 22.3Z M41.8 3.4 L49.1 8.8 L49.7 10.7 L45.7 14.8 L36.2 14.8 L30.8 5.9 L38.8 2.7Z M64.9 3.2 L70.7 3.9 L71.9 11.3 L58.9 9.5 L59.1 7.7Z M58.0 20.4 L71.4 22.0 L72.8 22.8 L68.5 26.5 L64.1 30.2 L58.9 30.5 L53.1 24.4Z M13.3 43.2 L17.1 38.2 L24.4 37.1 L29.3 46.9 L19.1 47.6 L13.1 43.5Z M7.3 53.0 L0.0 55.8 L-0.3 57.6 L5.6 63.5 L9.7 64.3 L14.2 57.2Z M21.9 62.3 L16.8 69.3 L21.9 72.9 L25.8 73.6 L32.7 70.0 L32.1 60.6 L31.5 60.4Z M43.7 68.1 L40.6 68.0 L39.0 58.6 L47.9 57.6 L54.3 63.6 L54.3 63.8Z M63.6 45.2 L70.7 50.2 L70.2 51.9 L60.8 55.5 L53.8 49.3 L58.6 44.6Z M67.5 70.8 L64.1 67.1 L64.1 66.8 L72.8 63.4 L80.1 69.7 L72.5 72.3Z M45.3 31.5 L35.5 31.3 L31.8 34.4 L36.2 43.9 L36.8 44.1 L45.4 42.6 L50.5 37.9Z M-1.2 3.2 L4.9 -0.2 L9.1 -0.0 L14.4 3.6 L3.9 11.2 L-0.0 11.3 L-1.1 10.4Z M69.2 40.0 L76.8 44.8 L83.5 42.7 L83.5 42.4 L75.0 36.5Z M60.0 76.3 L57.6 71.8 L46.8 75.9 L54.6 81.2Z M6.8 35.3 L-1.9 28.6 L0.4 25.2 L3.7 25.8 L10.8 29.4Z M49.1 88.8 L41.8 83.4 L38.8 82.7 L30.8 85.9 L36.2 94.8 L45.7 94.8 L49.7 90.7Z M64.9 83.2 L59.1 87.7 L58.9 89.5 L71.9 91.3 L70.7 83.9Z M9.1 80.0 L14.4 83.6 L3.9 91.2 L-0.0 91.3 L-1.1 90.4 L-1.2 83.2 L4.9 79.8Z M85.6 63.5 L79.7 57.6 L80.0 55.8 L87.3 53.0 L94.2 57.2 L89.7 64.3Z M89.1 -0.0 L94.4 3.6 L83.9 11.2 L80.0 11.3 L78.9 10.4 L78.8 3.2 L84.9 -0.2Z M78.1 28.6 L86.8 35.3 L90.8 29.4 L83.7 25.8 L80.4 25.2Z M78.8 83.2 L84.9 79.8 L89.1 80.0 L94.4 83.6 L83.9 91.2 L80.0 91.3 L78.9 90.4Z" fill="#7d2b1f" stroke="#7d2b1f" stroke-width="1.2" stroke-linejoin="round"/>
<path d="M0 0 H80 M0 0 V80 M0 80 H80 M80 0 V80" stroke="#6a221a" stroke-width="2" fill="none" opacity="0.7"/>
</pattern>
<pattern id="sand" x="102" y="41" width="80" height="80" patternUnits="userSpaceOnUse">
<rect width="80" height="80" fill="#daa662"/>
<g fill="none" stroke="#c78f50" stroke-linecap="round">
<path d="M25 69 Q34 52 42 40 T57 15" stroke-width="10"/>
<path d="M53 64 Q60 50 66 42 T75 29" stroke-width="5.5"/>
<path d="M8 19 Q14 13 20 9" stroke-width="5"/><path d="M26 17 Q32 11 38 7" stroke-width="5"/>
<path d="M18 33 Q28 32 38 27" stroke-width="4.5"/><path d="M47 48 Q56 47 65 42" stroke-width="4.5"/>
<path d="M40 70 Q44 60 50 54" stroke-width="5"/>
</g>
<ellipse cx="12.5" cy="50" rx="6" ry="11" fill="#c78f50" transform="rotate(12 12.5 50)"/>
<g fill="none" stroke="#e2b271" stroke-width="2.2" stroke-linecap="round"><path d="M33 72 Q42 54 50 42 T64 18"/><path d="M20 60 Q26 48 32 40"/><path d="M60 66 Q66 54 72 46"/></g>
<path d="M0 0 H80 M0 0 V80 M0 80 H80 M80 0 V80" stroke="#dcaa66" stroke-width="3.5" fill="none"/>
<path d="M0 79.5 H80" stroke="#d09c5c" stroke-width="1.6"/>
</pattern>
<pattern id="wat" x="102" y="41" width="26.67" height="26.67" patternUnits="userSpaceOnUse">
<rect width="26.67" height="26.67" fill="#48568f"/><rect x="4" y="4" width="18.6" height="18.6" fill="#4a5993"/>
</pattern>
</defs>
<rect x="99.8" y="54.4" width="455.49999999999994" height="270.20000000000005" fill="url(#rock)" filter="url(#bl)"/>
<rect x="102" y="56" width="80" height="65" fill="url(#wat)"/>
<rect x="101" y="56" width="108.9" height="9" fill="#3b2a68"/>
<rect x="181.9" y="64.8" width="28" height="2.4" fill="#33609b"/>
<g fill="#372662"><rect x="108" y="57" width="24" height="7.5"/><rect x="134" y="57" width="24" height="7.5"/><rect x="160" y="57" width="24" height="7.5"/><rect x="186" y="57" width="22" height="7.5"/></g>
<rect x="102" y="121" width="80" height="80" fill="url(#sand)" filter="url(#bl)"/>
<rect x="422" y="201" width="133" height="124" fill="url(#sand)" filter="url(#bl)"/>
<rect x="130.8" y="99" width="26.5" height="26.3" fill="#d9b16a"/>
<rect x="307.4" y="98" width="26.5" height="26.3" fill="#d9b16a"/>
<rect x="198.6" y="200.7" width="26.5" height="26.3" fill="#d9b16a"/>
<rect x="128.3" y="269.5" width="26.5" height="26.3" fill="#d9b16a"/>
<rect x="417" y="201.3" width="26.5" height="26.3" fill="#d9b16a"/>
<path d="M334.7,323 L266.3,189.5 Q264,185.5 267.5,183.5 A142,142 0 0 1 402,167.3 Q405.3,169.3 404.3,173 L366.3,323 Z" fill="#33619a" stroke="#2b4273" stroke-width="0.8"/>
<path d="M334.7,323 L266.3,189.5 Q264,185.5 267.5,183.5 A142,142 0 0 1 402,167.3 Q405.3,169.3 404.3,173 L366.3,323 Z" fill="url(#rock)" opacity="0.06" filter="url(#bl)"/>
<g filter="url(#bl2)">
<ellipse cx="338" cy="197" rx="9.6" ry="9.8" fill="#8a776d"/>
<ellipse cx="338" cy="194" rx="7.5" ry="6" fill="#96837a"/>
<rect x="332.4" y="205" width="2" height="21" fill="#878180"/><rect x="340.4" y="205" width="2" height="21" fill="#878180"/>
<rect x="330.6" y="225.3" width="4.4" height="1.6" fill="#878180"/><rect x="339.4" y="225.3" width="4.4" height="1.6" fill="#878180"/>
<rect x="337.3" y="182.5" width="2.6" height="6" fill="#4a3a36"/>
<path d="M336.4 187.5 L341.6 187.5 L341 194.5 L337 194.5Z" fill="#b27a2c"/>
<path d="M332 200.2 L344.6 188.2 L346.6 190.4 L334 202.4Z" fill="#8f2018"/>
<path d="M335 184 L342.5 184.5 L342 186.8 L335.5 186.5Z" fill="#7a2a20"/>
<ellipse cx="338.2" cy="177" rx="6" ry="3.9" fill="#5e2a24"/>
<ellipse cx="338.5" cy="180" rx="2.3" ry="3.2" fill="#b9b4b2"/>
<ellipse cx="335.6" cy="177.2" rx="1.7" ry="1.4" fill="#a8342a"/><ellipse cx="340.4" cy="177.2" rx="1.7" ry="1.4" fill="#a8342a"/>
<ellipse cx="338.6" cy="173" rx="4.8" ry="2.3" fill="#2e7d3c"/>
</g>
<path d="M328.6 194.6 V204.6 L331 202.4 L332.7 206.2 L334.3 205.5 L332.6 201.8 L335.9 201.6 Z" fill="#fff" stroke="#222" stroke-width="0.5"/>
</svg>
<div class="a" style="left:553.3px;top:36px;width:1.2px;height:383px;background:#6e6e6e;"></div>
<div class="a" style="left:0px;top:323.2px;width:553.3px;height:10px;background:#898989;"></div>
<div class="a" style="left:0px;top:323.2px;width:39.5px;height:10px;background:#a0a0a0;"></div>
<svg class="a" style="left:3.3px;top:325.8px" width="7" height="6" viewBox="0 0 7 6"><path d="M0.4 0.8 H2.8 L3.5 1.6 H6.6 V5.4 H0.4 Z" fill="#2e2e2e"/></svg>
<div class="t " style="left:11.5px;top:325.0px;color:#1a1a1a">Project</div>
<svg class="a" style="left:44.5px;top:325.6px" width="6" height="7" viewBox="0 0 6 7"><rect x="0.6" y="0.6" width="4.8" height="5.6" fill="#4a4a4a" stroke="#2e2e2e" stroke-width="0.5"/><path d="M1.3 2 H4.7 M1.3 3.4 H4.7 M1.3 4.8 H4.7" stroke="#8a8a8a" stroke-width="0.5"/></svg>
<div class="t " style="left:52.3px;top:325.0px;color:#1c1c1c">Console</div>
<svg class="a" style="left:535.5px;top:324.7px" width="6" height="7" viewBox="0 0 6 7"><rect x="0.8" y="3" width="4.2" height="3.2" fill="none" stroke="#9f9f9f" stroke-width="0.7"/><path d="M1.7 3 V1.8 A1.2 1.2 0 0 1 4.1 1.8" fill="none" stroke="#9f9f9f" stroke-width="0.7"/></svg>
<div class="a" style="left:546.3px;top:325.5px;width:0.9px;height:0.9px;background:#222;"></div>
<div class="a" style="left:546.3px;top:327.5px;width:0.9px;height:0.9px;background:#222;"></div>
<div class="a" style="left:546.3px;top:329.5px;width:0.9px;height:0.9px;background:#222;"></div>
<div class="a" style="left:0px;top:333.2px;width:553.3px;height:10.5px;background:#a3a3a3;"></div>
<div class="a" style="left:0px;top:343.6px;width:553.3px;height:0.6px;background:#8a8a8a;"></div>
<div class="a" style="left:3.8px;top:337.8px;width:5.6px;height:0.9px;background:#222;"></div>
<div class="a" style="left:6.15px;top:335.4px;width:0.9px;height:5.6px;background:#222;"></div>
<div class="arrD" style="left:11.5px;top:337.3px;border-top-color:#333;border-left-width:2.1px;border-right-width:2.1px;border-top-width:2.6px"></div>
<div class="a" style="left:334px;top:335.2px;width:148.3px;height:7px;background:#b8b8b8;border:0.5px solid #999;border-radius:1.5px"></div>
<svg class="a" style="left:336px;top:336.3px" width="5" height="5" viewBox="0 0 5 5"><circle cx="2" cy="2" r="1.3" fill="none" stroke="#666" stroke-width="0.6"/><path d="M3 3 L4.5 4.5" stroke="#666" stroke-width="0.6"/></svg>
<svg class="a" style="left:484px;top:334.5px" width="8" height="8" viewBox="0 0 8 8"><rect x="0.5" y="2.5" width="5" height="5" fill="none" stroke="#666" stroke-width="0.6"/><circle cx="4.5" cy="3" r="1.4" fill="none" stroke="#555" stroke-width="0.6"/><path d="M3.5 4 L2 5.8" stroke="#555" stroke-width="0.6"/><path d="M6 0.5 H7.5 V2" fill="none" stroke="#666" stroke-width="0.6"/></svg>
<div class="a" style="left:493.5px;top:334.2px;width:0.6px;height:9px;background:#8e8e8e;"></div>
<div class="a" style="left:506px;top:334.2px;width:0.6px;height:9px;background:#8e8e8e;"></div>
<div class="a" style="left:518.3px;top:334.2px;width:0.6px;height:9px;background:#8e8e8e;"></div>
<div class="a" style="left:531.3px;top:334.2px;width:0.6px;height:9px;background:#8e8e8e;"></div>
<svg class="a" style="left:496px;top:334.8px" width="8" height="8" viewBox="0 0 8 8"><circle cx="3" cy="2" r="1.5" fill="#2a2a2a"/><rect x="1.5" y="3.5" width="3" height="3.5" fill="#2a2a2a"/><path d="M4.5 4 L7 4.8 L5 6.5Z" fill="#2a2a2a"/></svg>
<svg class="a" style="left:508.5px;top:335.2px" width="8" height="7" viewBox="0 0 8 7"><path d="M1 4 L4 1 L7 2 L6.6 4.4 L3.6 6.6 Z" fill="#2a2a2a"/></svg>
<svg class="a" style="left:521px;top:335px" width="8" height="7" viewBox="0 0 8 7"><path d="M4 0.5 L5 2.8 L7.4 3 L5.6 4.6 L6.2 7 L4 5.7 L1.8 7 L2.4 4.6 L0.6 3 L3 2.8Z" fill="#777"/></svg>
<svg class="a" style="left:534px;top:335.5px" width="9" height="6" viewBox="0 0 9 6"><path d="M0.5 3 Q4 -0.5 7.5 3 Q4 6.5 0.5 3Z" fill="none" stroke="#333" stroke-width="0.7"/><circle cx="4" cy="3" r="1" fill="#333"/><path d="M1.5 5.5 L6.5 0.5" stroke="#333" stroke-width="0.7"/></svg>
<div class="t " style="left:542.8px;top:335.09999999999997px;color:#1a1a1a;font-size:6.5px;-webkit-text-stroke:0">23</div>
<div class="a" style="left:0px;top:344.2px;width:58px;height:74.3px;background:#a0a0a0;"></div>
<div class="a" style="left:51.5px;top:344.2px;width:6px;height:74.3px;background:#999;"></div>
<div class="a" style="left:52.3px;top:353px;width:4.4px;height:40px;background:#858585;border-radius:2.2px"></div>
<div class="a" style="left:52.6px;top:347px;width:0;height:0;border-left:1.9px solid transparent;border-right:1.9px solid transparent;border-bottom:2.6px solid #333"></div>
<div class="a" style="left:52.6px;top:413.5px;width:0;height:0;border-left:1.9px solid transparent;border-right:1.9px solid transparent;border-top:2.6px solid #333"></div>
<div class="a" style="left:57.6px;top:344.2px;width:0.7px;height:74.3px;background:#808080;"></div>
<div class="a" style="left:0px;top:401.3px;width:51.5px;height:8px;background:#8b8b8b;"></div>
<div class="arrD" style="left:3px;top:348px;border-top-color:#5a5a5a"></div>
<svg class="a" style="left:8.5px;top:346.3px" width="8" height="6" viewBox="0 0 8 6"><path d="M0.4 0.8 H2.8 L3.5 1.6 H6 V2.4 H1.6 L0.4 5.4 Z" fill="#555"/><path d="M1.9 2.8 H7.6 L6.4 5.4 H0.7 Z" fill="#3c3c3c"/></svg>
<div class="t b" style="left:17.7px;top:345.09999999999997px;color:#111">Assets</div>
<svg class="a" style="left:16px;top:354.4px" width="7" height="6" viewBox="0 0 7 6"><path d="M0.6 1 H2.8 L3.5 1.8 H6.4 V5.2 H0.6 Z" fill="#b0b0b0" stroke="#555" stroke-width="0.55"/></svg>
<div class="t" style="left:24px;top:353.0px;width:27.5px;overflow:hidden;color:#141414">AI</div>
<svg class="a" style="left:16px;top:362.3px" width="7" height="6" viewBox="0 0 7 6"><path d="M0.4 0.8 H2.8 L3.5 1.6 H6.6 V5.4 H0.4 Z" fill="#3a3a3a"/></svg>
<div class="t" style="left:24px;top:360.90000000000003px;width:27.5px;overflow:hidden;color:#141414">Animatior</div>
<svg class="a" style="left:16px;top:370.3px" width="7" height="6" viewBox="0 0 7 6"><path d="M0.4 0.8 H2.8 L3.5 1.6 H6.6 V5.4 H0.4 Z" fill="#3a3a3a"/></svg>
<div class="t" style="left:24px;top:368.90000000000003px;width:27.5px;overflow:hidden;color:#141414">Materials</div>
<svg class="a" style="left:16px;top:378.3px" width="7" height="6" viewBox="0 0 7 6"><path d="M0.4 0.8 H2.8 L3.5 1.6 H6.6 V5.4 H0.4 Z" fill="#3a3a3a"/></svg>
<div class="t" style="left:24px;top:376.90000000000003px;width:27.5px;overflow:hidden;color:#141414">Prefabs_f</div>
<svg class="a" style="left:16px;top:386.3px" width="7" height="6" viewBox="0 0 7 6"><path d="M0.4 0.8 H2.8 L3.5 1.6 H6.6 V5.4 H0.4 Z" fill="#3a3a3a"/></svg>
<div class="t" style="left:24px;top:384.90000000000003px;width:27.5px;overflow:hidden;color:#141414">Scenes</div>
<svg class="a" style="left:16px;top:394.3px" width="8" height="6" viewBox="0 0 8 6"><path d="M0.4 0.8 H2.8 L3.5 1.6 H6 V2.4 H1.6 L0.4 5.4 Z" fill="#555"/><path d="M1.9 2.8 H7.6 L6.4 5.4 H0.7 Z" fill="#3c3c3c"/></svg>
<div class="arrD" style="left:10px;top:396.1px;border-top-color:#5a5a5a"></div>
<div class="t" style="left:24px;top:392.90000000000003px;width:27.5px;overflow:hidden;color:#141414">Scripts</div>
<svg class="a" style="left:23px;top:402.3px" width="7" height="6" viewBox="0 0 7 6"><path d="M0.4 0.8 H2.8 L3.5 1.6 H6.6 V5.4 H0.4 Z" fill="#3a3a3a"/></svg>
<div class="t" style="left:31px;top:400.90000000000003px;width:20.5px;overflow:hidden;color:#141414">Hunter</div>
<svg class="a" style="left:16px;top:410.4px" width="7" height="6" viewBox="0 0 7 6"><path d="M0.6 1 H2.8 L3.5 1.8 H6.4 V5.2 H0.6 Z" fill="#b0b0b0" stroke="#555" stroke-width="0.55"/></svg>
<div class="t" style="left:24px;top:409.0px;width:27.5px;overflow:hidden;color:#141414">Shaders</div>
<div class="a" style="left:58.3px;top:344.2px;width:495px;height:10px;background:#a6a6a6;"></div>
<div class="a" style="left:58.3px;top:354.2px;width:495px;height:55px;background:#9a9a9a;"></div>
<div class="a" style="left:58.3px;top:409.2px;width:495px;height:9.3px;background:#a6a6a6;"></div>
<div class="t " style="left:60.2px;top:345.09999999999997px;color:#222">Assets</div>
<div class="t " style="left:80.5px;top:345.09999999999997px;color:#444">&gt;</div>
<div class="t " style="left:87.5px;top:345.09999999999997px;color:#222">Scripts</div>
<div class="t " style="left:108.5px;top:345.09999999999997px;color:#444">&gt;</div>
<div class="t b" style="left:115.3px;top:345.09999999999997px;color:#111">Hunter</div>
<svg class="a" style="left:69.3px;top:361px" width="25" height="29" viewBox="0 0 25 29"><path d="M2.5 0.5 H17.5 L24.5 7.5 V26.5 A2 2 0 0 1 22.5 28.5 H2.5 A2 2 0 0 1 0.5 26.5 V2.5 A2 2 0 0 1 2.5 0.5Z" fill="#c6c6c6" stroke="#9d9d9d" stroke-width="0.6"/><path d="M17.5 0.5 V5.5 A2 2 0 0 0 19.5 7.5 H24.5 Z" fill="#a9a9a9"/><path d="M9.8 6.5 L8.2 21.5 M15.8 6.5 L14.2 21.5 M5.8 11.3 H18.6 M5.2 16.7 H18" stroke="#1f6a25" stroke-width="2.1" fill="none"/></svg>
<div class="t" style="left:63.3px;top:392px;width:37px;text-align:center;font-size:5px;color:#1c1c1c">AIHunterS...</div>
<svg class="a" style="left:107.19999999999999px;top:361px" width="25" height="29" viewBox="0 0 25 29"><path d="M2.5 0.5 H17.5 L24.5 7.5 V26.5 A2 2 0 0 1 22.5 28.5 H2.5 A2 2 0 0 1 0.5 26.5 V2.5 A2 2 0 0 1 2.5 0.5Z" fill="#c6c6c6" stroke="#9d9d9d" stroke-width="0.6"/><path d="M17.5 0.5 V5.5 A2 2 0 0 0 19.5 7.5 H24.5 Z" fill="#a9a9a9"/><path d="M9.8 6.5 L8.2 21.5 M15.8 6.5 L14.2 21.5 M5.8 11.3 H18.6 M5.2 16.7 H18" stroke="#1f6a25" stroke-width="2.1" fill="none"/></svg>
<div class="t" style="left:101.19999999999999px;top:392px;width:37px;text-align:center;font-size:5px;color:#1c1c1c">AIHunterT...</div>
<svg class="a" style="left:145.1px;top:361px" width="25" height="29" viewBox="0 0 25 29"><path d="M2.5 0.5 H17.5 L24.5 7.5 V26.5 A2 2 0 0 1 22.5 28.5 H2.5 A2 2 0 0 1 0.5 26.5 V2.5 A2 2 0 0 1 2.5 0.5Z" fill="#c6c6c6" stroke="#9d9d9d" stroke-width="0.6"/><path d="M17.5 0.5 V5.5 A2 2 0 0 0 19.5 7.5 H24.5 Z" fill="#a9a9a9"/><path d="M9.8 6.5 L8.2 21.5 M15.8 6.5 L14.2 21.5 M5.8 11.3 H18.6 M5.2 16.7 H18" stroke="#1f6a25" stroke-width="2.1" fill="none"/></svg>
<div class="t" style="left:139.1px;top:392px;width:37px;text-align:center;font-size:5px;color:#1c1c1c">BulletBeha...</div>
<svg class="a" style="left:183.0px;top:361px" width="25" height="29" viewBox="0 0 25 29"><path d="M2.5 0.5 H17.5 L24.5 7.5 V26.5 A2 2 0 0 1 22.5 28.5 H2.5 A2 2 0 0 1 0.5 26.5 V2.5 A2 2 0 0 1 2.5 0.5Z" fill="#c6c6c6" stroke="#9d9d9d" stroke-width="0.6"/><path d="M17.5 0.5 V5.5 A2 2 0 0 0 19.5 7.5 H24.5 Z" fill="#a9a9a9"/><path d="M9.8 6.5 L8.2 21.5 M15.8 6.5 L14.2 21.5 M5.8 11.3 H18.6 M5.2 16.7 H18" stroke="#1f6a25" stroke-width="2.1" fill="none"/></svg>
<div class="t" style="left:177.0px;top:392px;width:37px;text-align:center;font-size:5px;color:#1c1c1c">HunterVisi...</div>
<div class="a" style="left:517.5px;top:413.4px;width:28px;height:0.7px;background:#6a6a6a;"></div>
<div class="a" style="left:531px;top:411.6px;width:4.4px;height:4.4px;background:#3c3c3c;border-radius:50%"></div>
<div class="a" style="left:0px;top:418.5px;width:800px;height:6.5px;background:#7e7e7e;"></div>
<svg class="a" style="left:2px;top:419.5px" width="14" height="6" viewBox="0 0 14 6"><circle cx="3" cy="3.5" r="2.8" fill="#ddd"/><rect x="2.6" y="1.6" width="0.9" height="2.6" fill="#333"/><rect x="2.6" y="4.8" width="0.9" height="0.8" fill="#333"/><path d="M9 1 Q11 1 11 3 V6 H8.5 V3Q8.5 1.8 9.5 1.5" fill="none" stroke="#3a3a3a" stroke-width="0.6"/></svg>
<svg class="a" style="left:752px;top:419.6px" width="9" height="6" viewBox="0 0 9 6"><circle cx="4.5" cy="4.5" r="3.4" fill="none" stroke="#5c5c5c" stroke-width="0.7"/><path d="M2.5 1.2 L6.5 5" stroke="#5c5c5c" stroke-width="0.7"/></svg>
<svg class="a" style="left:765px;top:419.6px" width="9" height="6" viewBox="0 0 9 6"><circle cx="4.5" cy="4.5" r="3.4" fill="none" stroke="#5c5c5c" stroke-width="0.7"/><path d="M2.5 1.2 L6.5 5" stroke="#5c5c5c" stroke-width="0.7"/></svg>
<svg class="a" style="left:777px;top:419.6px" width="9" height="6" viewBox="0 0 9 6"><circle cx="4.5" cy="4.5" r="3.4" fill="none" stroke="#5c5c5c" stroke-width="0.7"/><path d="M2.5 1.2 L6.5 5" stroke="#5c5c5c" stroke-width="0.7"/></svg>
<svg class="a" style="left:789px;top:419.6px" width="9" height="6" viewBox="0 0 9 6"><circle cx="4.5" cy="4.5" r="3.4" fill="none" stroke="#5c5c5c" stroke-width="0.7"/><path d="M2.5 1.2 L6.5 5" stroke="#5c5c5c" stroke-width="0.7"/></svg>
<div class="a" style="left:554.5px;top:36px;width:245.5px;height:10px;background:#898989;"></div>
<div class="a" style="left:554.5px;top:36px;width:45px;height:10px;background:#a0a0a0;"></div>
<svg class="a" style="left:558.3px;top:38.2px" width="6" height="6" viewBox="0 0 6 6"><circle cx="3" cy="3" r="2.6" fill="#2c2c2c"/><rect x="2.6" y="2.6" width="0.9" height="2" fill="#ddd"/><rect x="2.6" y="1.3" width="0.9" height="0.8" fill="#ddd"/></svg>
<div class="t " style="left:565.5px;top:36.7px;color:#1a1a1a;letter-spacing:0.05px">Inspector</div>
<svg class="a" style="left:781px;top:37.5px" width="6" height="7" viewBox="0 0 6 7"><rect x="0.8" y="3" width="4.2" height="3.2" fill="none" stroke="#9f9f9f" stroke-width="0.7"/><path d="M1.7 3 V1.8 A1.2 1.2 0 0 1 4.1 1.8" fill="none" stroke="#9f9f9f" stroke-width="0.7"/></svg>
<div class="a" style="left:792.3px;top:38.3px;width:0.9px;height:0.9px;background:#a2a2a2;"></div>
<div class="a" style="left:792.3px;top:40.3px;width:0.9px;height:0.9px;background:#a2a2a2;"></div>
<div class="a" style="left:792.3px;top:42.3px;width:0.9px;height:0.9px;background:#a2a2a2;"></div>
<div class="a" style="left:554.5px;top:46px;width:245.5px;height:372.5px;background:#a0a0a0;"></div>
<div class="a" style="left:793.5px;top:46px;width:6.5px;height:372.5px;background:#999;"></div>
<div class="a" style="left:794.6px;top:203px;width:4.4px;height:207px;background:#868686;border-radius:2.2px"></div>
<div class="a" style="left:794.9px;top:49px;width:0;height:0;border-left:1.9px solid transparent;border-right:1.9px solid transparent;border-bottom:2.6px solid #333"></div>
<div class="a" style="left:794.9px;top:413.3px;width:0;height:0;border-left:1.9px solid transparent;border-right:1.9px solid transparent;border-top:2.6px solid #333"></div>
<div class="t " style="left:563.5px;top:49.300000000000004px;letter-spacing:0.13px;color:#141414">Offset</div>
<div class="t " style="left:656px;top:49.300000000000004px;color:#141414">X</div>
<div class="fld" style="left:662px;top:49.6px;width:36.6px;background:#bebebe"><span style="color:#141414;letter-spacing:0.13px;">0</span></div>
<div class="t " style="left:702px;top:49.300000000000004px;color:#141414">Y</div>
<div class="fld" style="left:708.8px;top:49.6px;width:35.5px;background:#bebebe"><span style="color:#141414;letter-spacing:0.13px;">-0.0961803</span></div>
<div class="t " style="left:563.5px;top:59.300000000000004px;letter-spacing:0.13px;color:#141414">Size</div>
<div class="t " style="left:656px;top:59.300000000000004px;color:#141414">X</div>
<div class="fld" style="left:662px;top:59.6px;width:36.6px;background:#bebebe"><span style="color:#141414;letter-spacing:0.13px;">1</span></div>
<div class="t " style="left:702px;top:59.300000000000004px;color:#141414">Y</div>
<div class="fld" style="left:708.8px;top:59.6px;width:35.5px;background:#bebebe"><span style="color:#141414;letter-spacing:0.13px;">0.8076394</span></div>
<div class="t " style="left:563.5px;top:69.3px;letter-spacing:0.13px;color:#141414">Edge Radius</div>
<div class="fld" style="left:655px;top:69.6px;width:136.5px;background:#bebebe"><span style="color:#141414;letter-spacing:0.13px;">0</span></div>
<div class="arrR" style="left:558.5px;top:81.1px;border-left-color:#4a4a4a"></div>
<div class="t " style="left:563.5px;top:79.3px;letter-spacing:0.13px;color:#141414">Info</div>
<div class="a" style="left:554.5px;top:90px;width:239px;height:0.7px;background:#848484;"></div>
<div class="a" style="left:554.5px;top:90.7px;width:239px;height:11.3px;background:#a5a5a5;"></div>
<div class="arrD" style="left:557.5px;top:94.6px;border-top-color:#4a4a4a"></div>
<svg class="a" style="left:564px;top:92.6px" width="8" height="8" viewBox="0 0 8 8"><circle cx="4" cy="4" r="3.6" fill="#2a7a2f"/><path d="M4 0.4 A3.6 3.6 0 0 1 7.6 4 H4Z M4 7.6 A3.6 3.6 0 0 1 0.4 4 H4Z" fill="#ddd"/><circle cx="4" cy="4" r="3.6" fill="none" stroke="#1d4d20" stroke-width="0.5"/></svg>
<div class="t b" style="left:583.8px;top:92.4px;letter-spacing:0.13px;color:#141414">Rigidbody 2D</div>
<svg class="a" style="left:763.5px;top:93.6px" width="6" height="6" viewBox="0 0 6 6"><circle cx="3" cy="3" r="2.6" fill="#2c2c2c"/><text x="3" y="4.7" font-size="4.4" text-anchor="middle" fill="#ccc" font-family="Liberation Sans" font-weight="bold">?</text></svg>
<svg class="a" style="left:773.5px;top:93.6px" width="7" height="6" viewBox="0 0 7 6"><path d="M0.5 1.8 H6.5 M0.5 4.2 H6.5" stroke="#333" stroke-width="0.6"/><rect x="3.8" y="0.8" width="1.2" height="2" fill="#333"/><rect x="1.6" y="3.2" width="1.2" height="2" fill="#333"/></svg>
<div class="a" style="left:786.3px;top:93.89999999999999px;width:0.9px;height:0.9px;background:#333;"></div>
<div class="a" style="left:786.3px;top:95.89999999999999px;width:0.9px;height:0.9px;background:#333;"></div>
<div class="a" style="left:786.3px;top:97.89999999999999px;width:0.9px;height:0.9px;background:#333;"></div>
<div class="t " style="left:563.5px;top:104.0px;letter-spacing:0.13px;color:#141414">Body Type</div>
<div class="t " style="left:563.5px;top:114.0px;letter-spacing:0.13px;color:#141414">Material</div>
<div class="t " style="left:563.5px;top:124.10000000000001px;letter-spacing:0.13px;color:#141414">Simulated</div>
<div class="t " style="left:563.5px;top:134.1px;letter-spacing:0.13px;color:#141414">Use Full Kinematic Contacts</div>
<div class="t " style="left:563.5px;top:144.1px;letter-spacing:0.13px;color:#141414">Collision Detection</div>
<div class="t " style="left:563.5px;top:154.1px;letter-spacing:0.13px;color:#141414">Sleeping Mode</div>
<div class="t " style="left:563.5px;top:164.2px;letter-spacing:0.13px;color:#141414">Interpolate</div>
<div class="dd" style="left:655px;top:104.3px;width:136.5px;background:#b4b4b4"><span style="color:#141414;letter-spacing:0.13px;">Kinematic</span><i style="border-top-color:#222"></i></div>
<div class="fld" style="left:655px;top:114.3px;width:136.5px;background:#bebebe"><span style="color:#141414;letter-spacing:0.13px;">None (Physics Material 2D)</span></div>
<svg class="a" style="left:783.5px;top:115.5px" width="6" height="6" viewBox="0 0 6 6"><circle cx="3" cy="3" r="2.3" fill="none" stroke="#333" stroke-width="0.6"/><circle cx="3" cy="3" r="0.8" fill="#333"/></svg>
<div class="cb" style="left:655.5px;top:125.5px"></div>
<svg class="a" style="left:655.5px;top:125.5px" width="6" height="6" viewBox="0 0 6 6"><path d="M1.2 3 L2.4 4.3 L4.8 1.3" fill="none" stroke="#1a1a1a" stroke-width="0.8"/></svg>
<div class="cb" style="left:655.5px;top:135.5px"></div>
<div class="dd" style="left:655px;top:144.4px;width:136.5px;background:#b4b4b4"><span style="color:#141414;letter-spacing:0.13px;">Discrete</span><i style="border-top-color:#222"></i></div>
<div class="dd" style="left:655px;top:154.4px;width:136.5px;background:#b4b4b4"><span style="color:#141414;letter-spacing:0.13px;">Start Awake</span><i style="border-top-color:#222"></i></div>
<div class="dd" style="left:655px;top:164.5px;width:136.5px;background:#b4b4b4"><span style="color:#141414;letter-spacing:0.13px;">None</span><i style="border-top-color:#222"></i></div>
<div class="arrD" style="left:558px;top:176.8px;border-top-color:#4a4a4a"></div>
<div class="t " style="left:563.5px;top:174.5px;letter-spacing:0.13px;color:#141414">Constraints</div>
<div class="t " style="left:571px;top:184.5px;letter-spacing:0.13px;color:#141414">Freeze Position</div>
<div class="cb" style="left:655.5px;top:185.9px"></div>
<div class="t " style="left:663.5px;top:184.5px;">X</div>
<div class="cb" style="left:671px;top:185.9px"></div>
<div class="t " style="left:679px;top:184.5px;">Y</div>
<div class="t " style="left:571px;top:194.5px;letter-spacing:0.13px;color:#141414">Freeze Rotation</div>
<div class="cb" style="left:655.5px;top:195.9px"></div>
<div class="t " style="left:663.5px;top:194.5px;">Z</div>
<div class="arrD" style="left:558px;top:206.8px;border-top-color:#4a4a4a"></div>
<div class="t " style="left:563.5px;top:204.5px;letter-spacing:0.13px;color:#141414">Info</div>
<div class="t " style="left:565px;top:214.5px;letter-spacing:0.13px;color:#6f6f6f">Position</div>
<div class="t " style="left:656px;top:214.5px;color:#6f6f6f">X</div>
<div class="fld" style="left:662px;top:214.8px;width:36.6px;background:#b0b0b0"><span style="color:#6f6f6f;letter-spacing:0.13px;">0.4137938</span></div>
<div class="t " style="left:702px;top:214.5px;color:#6f6f6f">Y</div>
<div class="fld" style="left:708.8px;top:214.8px;width:35.5px;background:#b0b0b0"><span style="color:#6f6f6f;letter-spacing:0.13px;">-3.852025</span></div>
<div class="t " style="left:565px;top:224.5px;letter-spacing:0.13px;color:#6f6f6f">Rotation</div>
<div class="fld" style="left:655px;top:224.8px;width:136.5px;background:#b0b0b0"><span style="color:#6f6f6f;letter-spacing:0.13px;">96.13134</span></div>
<div class="t " style="left:565px;top:234.6px;letter-spacing:0.13px;color:#6f6f6f">Velocity</div>
<div class="t " style="left:656px;top:234.6px;color:#6f6f6f">X</div>
<div class="fld" style="left:662px;top:234.9px;width:36.6px;background:#b0b0b0"><span style="color:#6f6f6f;letter-spacing:0.13px;">0</span></div>
<div class="t " style="left:702px;top:234.6px;color:#6f6f6f">Y</div>
<div class="fld" style="left:708.8px;top:234.9px;width:35.5px;background:#b0b0b0"><span style="color:#6f6f6f;letter-spacing:0.13px;">0</span></div>
<div class="t " style="left:565px;top:244.6px;letter-spacing:0.13px;color:#6f6f6f">Angular Velocity</div>
<div class="fld" style="left:655px;top:244.9px;width:136.5px;background:#b0b0b0"><span style="color:#6f6f6f;letter-spacing:0.13px;">0</span></div>
<div class="t " style="left:565px;top:254.59999999999997px;letter-spacing:0.13px;color:#6f6f6f">Inertia</div>
<div class="fld" style="left:655px;top:254.89999999999998px;width:136.5px;background:#b0b0b0"><span style="color:#6f6f6f;letter-spacing:0.13px;">0</span></div>
<div class="t " style="left:565px;top:264.59999999999997px;letter-spacing:0.13px;color:#6f6f6f">Local Center of Mass</div>
<div class="t " style="left:656px;top:264.59999999999997px;color:#6f6f6f">X</div>
<div class="fld" style="left:662px;top:264.9px;width:36.6px;background:#b0b0b0"><span style="color:#6f6f6f;letter-spacing:0.13px;">0</span></div>
<div class="t " style="left:702px;top:264.59999999999997px;color:#6f6f6f">Y</div>
<div class="fld" style="left:708.8px;top:264.9px;width:35.5px;background:#b0b0b0"><span style="color:#6f6f6f;letter-spacing:0.13px;">0</span></div>
<div class="t " style="left:565px;top:274.5px;letter-spacing:0.13px;color:#6f6f6f">World Center of Mass</div>
<div class="t " style="left:656px;top:274.5px;color:#6f6f6f">X</div>
<div class="fld" style="left:662px;top:274.8px;width:36.6px;background:#b0b0b0"><span style="color:#6f6f6f;letter-spacing:0.13px;">0.4137938</span></div>
<div class="t " style="left:702px;top:274.5px;color:#6f6f6f">Y</div>
<div class="fld" style="left:708.8px;top:274.8px;width:35.5px;background:#b0b0b0"><span style="color:#6f6f6f;letter-spacing:0.13px;">-3.852025</span></div>
<div class="t " style="left:565px;top:284.4px;letter-spacing:0.13px;color:#6f6f6f">Sleep State</div>
<div class="t " style="left:657px;top:284.4px;letter-spacing:0.13px;color:#6f6f6f">Asleep</div>
<div class="arrR" style="left:566.5px;top:296.0px;border-left-color:#4a4a4a"></div>
<div class="t " style="left:571px;top:294.2px;letter-spacing:0.13px;color:#141414">Contacts</div>
<div class="a" style="left:554.5px;top:305.7px;width:239px;height:0.7px;background:#848484;"></div>
<div class="a" style="left:554.5px;top:306.4px;width:239px;height:10.6px;background:#a5a5a5;"></div>
<div class="arrR" style="left:558.0px;top:309.5px;border-left-color:#4a4a4a"></div>
<div class="a" style="left:564.5px;top:308.5px;width:6.5px;height:7px;background:#c9c9c9;border-radius:1px"></div>
<div class="t b" style="left:566.3px;top:307.9px;color:#1f6a25;font-size:5px">#</div>
<div class="cb" style="left:574.2px;top:309.1px"></div>
<svg class="a" style="left:574.2px;top:309.1px" width="6" height="6" viewBox="0 0 6 6"><path d="M1.2 3 L2.4 4.3 L4.8 1.3" fill="none" stroke="#1a1a1a" stroke-width="0.8"/></svg>
<div class="t b" style="left:583.8px;top:307.8px;letter-spacing:0.13px;color:#141414">AI Hunter Tracking (Script)</div>
<svg class="a" style="left:763.5px;top:309px" width="6" height="6" viewBox="0 0 6 6"><circle cx="3" cy="3" r="2.6" fill="#2c2c2c"/><text x="3" y="4.7" font-size="4.4" text-anchor="middle" fill="#ccc" font-family="Liberation Sans" font-weight="bold">?</text></svg>
<svg class="a" style="left:773.5px;top:309px" width="7" height="6" viewBox="0 0 7 6"><path d="M0.5 1.8 H6.5 M0.5 4.2 H6.5" stroke="#333" stroke-width="0.6"/><rect x="3.8" y="0.8" width="1.2" height="2" fill="#333"/><rect x="1.6" y="3.2" width="1.2" height="2" fill="#333"/></svg>
<div class="a" style="left:786.3px;top:309.3px;width:0.9px;height:0.9px;background:#333;"></div>
<div class="a" style="left:786.3px;top:311.3px;width:0.9px;height:0.9px;background:#333;"></div>
<div class="a" style="left:786.3px;top:313.3px;width:0.9px;height:0.9px;background:#333;"></div>
<div class="a" style="left:554.5px;top:317px;width:239px;height:0.7px;background:#848484;"></div>
<div class="a" style="left:554.5px;top:317.7px;width:239px;height:10.6px;background:#a5a5a5;"></div>
<div class="arrD" style="left:557.5px;top:321.3px;border-top-color:#4a4a4a"></div>
<div class="a" style="left:564.5px;top:319.8px;width:6.5px;height:7px;background:#c9c9c9;border-radius:1px"></div>
<div class="t b" style="left:566.3px;top:319.2px;color:#1f6a25;font-size:5px">#</div>
<div class="cb" style="left:574.2px;top:320.40000000000003px"></div>
<svg class="a" style="left:574.2px;top:320.40000000000003px" width="6" height="6" viewBox="0 0 6 6"><path d="M1.2 3 L2.4 4.3 L4.8 1.3" fill="none" stroke="#1a1a1a" stroke-width="0.8"/></svg>
<div class="t b" style="left:583.8px;top:319.1px;letter-spacing:0.13px;color:#141414">AI Hunter Shooting (Script)</div>
<svg class="a" style="left:763.5px;top:320.3px" width="6" height="6" viewBox="0 0 6 6"><circle cx="3" cy="3" r="2.6" fill="#2c2c2c"/><text x="3" y="4.7" font-size="4.4" text-anchor="middle" fill="#ccc" font-family="Liberation Sans" font-weight="bold">?</text></svg>
<svg class="a" style="left:773.5px;top:320.3px" width="7" height="6" viewBox="0 0 7 6"><path d="M0.5 1.8 H6.5 M0.5 4.2 H6.5" stroke="#333" stroke-width="0.6"/><rect x="3.8" y="0.8" width="1.2" height="2" fill="#333"/><rect x="1.6" y="3.2" width="1.2" height="2" fill="#333"/></svg>
<div class="a" style="left:786.3px;top:320.6px;width:0.9px;height:0.9px;background:#333;"></div>
<div class="a" style="left:786.3px;top:322.6px;width:0.9px;height:0.9px;background:#333;"></div>
<div class="a" style="left:786.3px;top:324.6px;width:0.9px;height:0.9px;background:#333;"></div>
<div class="t " style="left:563.5px;top:331.0px;letter-spacing:0.13px;color:#6f6f6f">Script</div>
<div class="fld" style="left:655px;top:331.3px;width:136.5px;background:#b0b0b0"><span style="color:#6f6f6f;letter-spacing:0.13px;">&nbsp;&nbsp;&nbsp;AIHunterShooting</span></div>
<svg class="a" style="left:657.3px;top:332.8px" width="5" height="5" viewBox="0 0 5 5"><rect x="0.8" y="0.5" width="3.4" height="4" fill="#c5c5c5"/><text x="2.5" y="3.8" font-size="3.6" text-anchor="middle" fill="#3b7a40" font-family="Liberation Sans">#</text></svg>
<svg class="a" style="left:783.5px;top:332.5px" width="6" height="6" viewBox="0 0 6 6"><circle cx="3" cy="3" r="2.3" fill="none" stroke="#777" stroke-width="0.6"/><circle cx="3" cy="3" r="0.8" fill="#777"/></svg>
<div class="t " style="left:563.5px;top:341.0px;letter-spacing:0.13px;color:#141414">Rate Of Fire</div>
<div class="fld" style="left:655px;top:341.3px;width:136.5px;background:#bebebe"><span style="color:#141414;letter-spacing:0.13px;">1.5</span></div>
<div class="t " style="left:563.5px;top:351.09999999999997px;letter-spacing:0.13px;color:#141414">Can Fire</div>
<div class="cb" style="left:655.5px;top:352.5px"></div>
<svg class="a" style="left:655.5px;top:352.5px" width="6" height="6" viewBox="0 0 6 6"><path d="M1.2 3 L2.4 4.3 L4.8 1.3" fill="none" stroke="#1a1a1a" stroke-width="0.8"/></svg>
<div class="a" style="left:554.5px;top:363.6px;width:239px;height:0.7px;background:#848484;"></div>
<div class="a" style="left:554.5px;top:364.3px;width:239px;height:26.7px;background:#a3a3a3;"></div>
<div class="a" style="left:563px;top:369px;width:14.5px;height:14.5px;background:#c8c8c8;border:0.5px solid #909090;border-radius:1.5px"></div>
<div class="arrR" style="left:557.3px;top:383.6px;border-left-color:#4a4a4a"></div>
<div class="t " style="left:582px;top:366.09999999999997px;color:#141414;font-size:6.8px;letter-spacing:0.12px">Sprites-Default (Material)</div>
<svg class="a" style="left:778px;top:367.3px" width="6" height="6" viewBox="0 0 6 6"><circle cx="3" cy="3" r="2.6" fill="#2c2c2c"/><text x="3" y="4.7" font-size="4.4" text-anchor="middle" fill="#ccc" font-family="Liberation Sans" font-weight="bold">?</text></svg>
<div class="a" style="left:789.2px;top:367.6px;width:0.9px;height:0.9px;background:#333;"></div>
<div class="a" style="left:789.2px;top:369.6px;width:0.9px;height:0.9px;background:#333;"></div>
<div class="a" style="left:789.2px;top:371.6px;width:0.9px;height:0.9px;background:#333;"></div>
<div class="t " style="left:580.5px;top:378.2px;letter-spacing:0.13px;color:#6f6f6f">Shader</div>
<div class="dd" style="left:606px;top:378.5px;width:160.5px;background:#a6a6a6"><span style="color:#6f6f6f;letter-spacing:0.13px;">Sprites/Default</span><i style="border-top-color:#666"></i></div>
<div class="a" style="left:770px;top:378.6px;width:21.5px;height:8px;background:#acacac;border:0.5px solid #8c8c8c;border-radius:1px"></div>
<div class="t " style="left:773.5px;top:378.3px;color:#6f6f6f">Edit...</div>
<div class="a" style="left:554.5px;top:391px;width:239px;height:0.7px;background:#848484;"></div>
<div class="a" style="left:554.5px;top:396.2px;width:239px;height:0.7px;background:#848484;"></div>
<div class="a" style="left:616px;top:401.7px;width:114.5px;height:10.6px;background:#b6b6b6;border:0.5px solid #8c8c8c;border-radius:1.5px"></div>
<div class="t" style="left:616px;top:403px;width:114.5px;text-align:center;color:#141414;letter-spacing:0.1px">Add Component</div>
</div></body></html>
